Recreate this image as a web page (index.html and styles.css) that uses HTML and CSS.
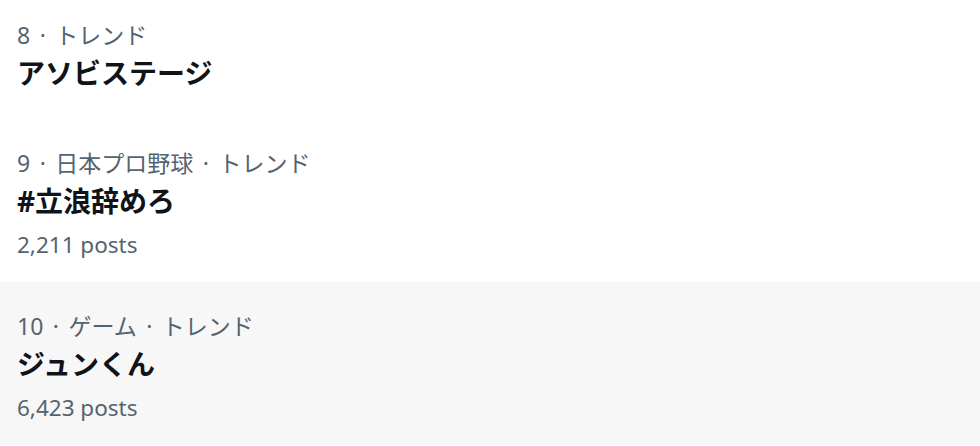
FILE: index.html
```html
<!DOCTYPE html>
<html lang="ja">
<head>
  <meta charset="UTF-8">
  <title>トレンド</title>
  <link rel="stylesheet" href="styles.css">
</head>
<body>

  <div class="trends">
    <div class="trend short">
      <div class="meta">8 · トレンド</div>
      <div class="name">アソビステージ</div>
    </div>
    <div class="trend">
      <div class="meta">9 · 日本プロ野球 · トレンド</div>
      <div class="name">#立浪辞めろ</div>
      <div class="posts">2,211 posts</div>
    </div>
    <div class="trend hover">
      <div class="meta">10 · ゲーム · トレンド</div>
      <div class="name">ジュンくん</div>
      <div class="posts">6,423 posts</div>
    </div>
  </div>

</body>
</html>
```

FILE: styles.css
```css
body {
  margin: 0;
  background-color: #fff;
  color: #0f1419;
  font-family: "Noto Sans", "Noto Sans CJK JP", sans-serif;
}

.trends {
  margin-top: -9px;
}

.trend {
  padding: 29px 17px 22px;
}

.trend.short {
  padding-bottom: 28px;
}

.trend.hover {
  background-color: #f7f7f7;
}

.meta, .posts {
  font-size: 23px;
  line-height: 30px;
  color: #536471;
}

.meta {
  word-spacing: 3.5px;
}

.name {
  margin-top: 5px;
  font-size: 28px;
  line-height: 36px;
  font-weight: 700;
}

.posts {
  margin-top: 11px;
  font-size: 22.5px;
}
```
